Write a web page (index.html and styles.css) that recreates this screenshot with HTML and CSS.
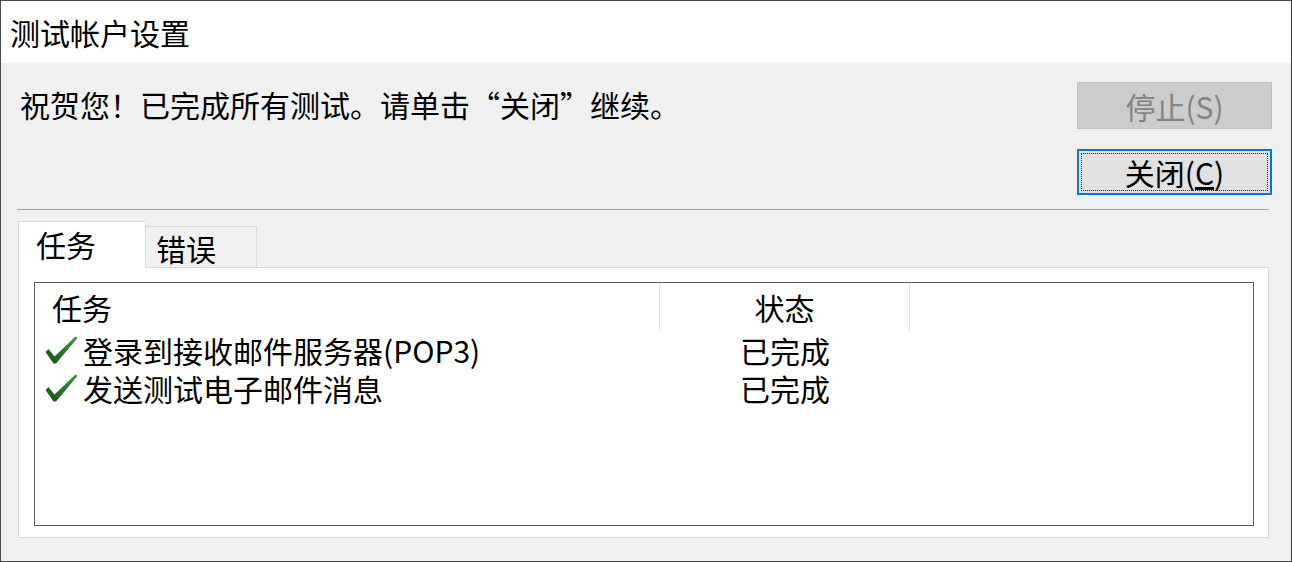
FILE: index.html
```html
<!DOCTYPE html>
<html lang="zh-CN">
<head>
    <meta charset="UTF-8">
    <title>测试帐户设置</title>
    <link rel="stylesheet" href="styles.css">
</head>
<body>
    <div class="window">
        <div class="title-bar">测试帐户设置</div>

        <div class="dialog-body">
            <div class="top-row">
                <div class="message">祝贺您！已完成所有测试。请单击“关闭”继续。</div>
                <div class="buttons">
                    <button class="btn btn-disabled" disabled>停止(S)</button>
                    <button class="btn btn-default"><span class="focus-ring">关闭(<u>C</u>)</span></button>
                </div>
            </div>

            <div class="separator"></div>

            <div class="tabs">
                <div class="tab tab-active">任务</div>
                <div class="tab">错误</div>
            </div>

            <div class="tab-panel">
                <div class="list-view">
                    <div class="list-row list-header">
                        <div class="cell cell-task">任务</div>
                        <div class="cell cell-status">状态</div>
                        <div class="cell cell-rest"></div>
                    </div>
                    <div class="list-row">
                        <div class="cell cell-task">
                            <svg class="check" viewBox="0 0 33 28" width="33" height="28">
                                <defs>
                                    <linearGradient id="g1" x1="0" y1="1" x2="1" y2="0">
                                        <stop offset="0" stop-color="#145214"/>
                                        <stop offset="1" stop-color="#3f9a3f"/>
                                    </linearGradient>
                                </defs>
                                <path d="M0.5 16 L3.5 13 L9.5 20.5 L30.5 0.5 L32.5 2 L11 27.5 L8.5 27.5 Z" fill="url(#g1)"/>
                            </svg>
                            <span>登录到接收邮件服务器(POP3)</span>
                        </div>
                        <div class="cell cell-status">已完成</div>
                        <div class="cell cell-rest"></div>
                    </div>
                    <div class="list-row">
                        <div class="cell cell-task">
                            <svg class="check" viewBox="0 0 33 28" width="33" height="28">
                                <path d="M0.5 16 L3.5 13 L9.5 20.5 L30.5 0.5 L32.5 2 L11 27.5 L8.5 27.5 Z" fill="url(#g1)"/>
                            </svg>
                            <span>发送测试电子邮件消息</span>
                        </div>
                        <div class="cell cell-status">已完成</div>
                        <div class="cell cell-rest"></div>
                    </div>
                </div>
            </div>
        </div>
    </div>
</body>
</html>
```

FILE: styles.css
```css
html, body {
    margin: 0;
    padding: 0;
}

body {
    font-family: "Noto Sans CJK SC", "Noto Sans", sans-serif;
    font-size: 30px;
    color: #000;
    background-color: #f0f0f0;
}

.window {
    width: 1292px;
    height: 562px;
    box-sizing: border-box;
    border: 1px solid #4a4a4a;
    border-right-color: #2f3a32;
    background-color: #f0f0f0;
    display: flex;
    flex-direction: column;
}

.title-bar {
    height: 62px;
    line-height: 62px;
    padding-left: 9px;
    background-color: #fff;
    flex-shrink: 0;
}

.dialog-body {
    flex-grow: 1;
    display: flex;
    flex-direction: column;
}

.top-row {
    display: flex;
    justify-content: space-between;
    padding: 19px 19px 0 19px;
}

.message {
    line-height: 44px;
}

.buttons {
    display: flex;
    flex-direction: column;
    gap: 20px;
}

.btn {
    width: 195px;
    height: 47px;
    box-sizing: border-box;
    font-family: inherit;
    font-size: 30px;
    padding: 0;
    line-height: 1;
}

.btn-disabled {
    background-color: #cccccc;
    border: 1px solid #bfbfbf;
    color: #838383;
}

.btn-default {
    height: 46px;
    background-color: #e1e1e1;
    border: 2px solid #0078d7;
    color: #000;
    padding: 2px;
}

.focus-ring {
    display: flex;
    align-items: center;
    justify-content: center;
    height: 100%;
    box-sizing: border-box;
    border: 1px dotted #222;
}

.separator {
    height: 1px;
    background-color: #a0a0a0;
    margin: 14px 22px 0 16px;
}

.tabs {
    display: flex;
    align-items: flex-end;
    margin: 11px 0 0 17px;
    height: 46px;
}

.tab {
    height: 41px;
    box-sizing: border-box;
    width: 112px;
    padding-left: 10px;
    line-height: 42px;
    background-color: #f0f0f0;
    border: 1px solid #d9d9d9;
    border-bottom: none;
}

.tab-active {
    width: 127px;
    height: 47px;
    padding-left: 17px;
    line-height: 44px;
    background-color: #fff;
    border-right: none;
    position: relative;
    margin-bottom: -1px;
    z-index: 1;
}

.tab-panel {
    margin: 0 22px 23px 17px;
    flex-grow: 1;
    background-color: #fff;
    border: 1px solid #d9d9d9;
    padding: 14px 14px 11px 15px;
    display: flex;
}

.list-view {
    flex-grow: 1;
    border: 1px solid #5f5f5f;
    background-color: #fff;
}

.list-row {
    display: grid;
    grid-template-columns: 625px 250px 1fr;
    height: 38px;
    line-height: 38px;
}

.list-header {
    height: 48px;
    line-height: 48px;
}

.list-header .cell-task,
.list-header .cell-status {
    border-right: 1px solid #e5e5e5;
}

.list-header .cell-task {
    padding-left: 17px;
}

.cell-task {
    display: flex;
    align-items: center;
    padding-left: 10px;
    white-space: nowrap;
}

.cell-status {
    text-align: center;
}

.check {
    margin-right: 5px;
    flex-shrink: 0;
}
```
